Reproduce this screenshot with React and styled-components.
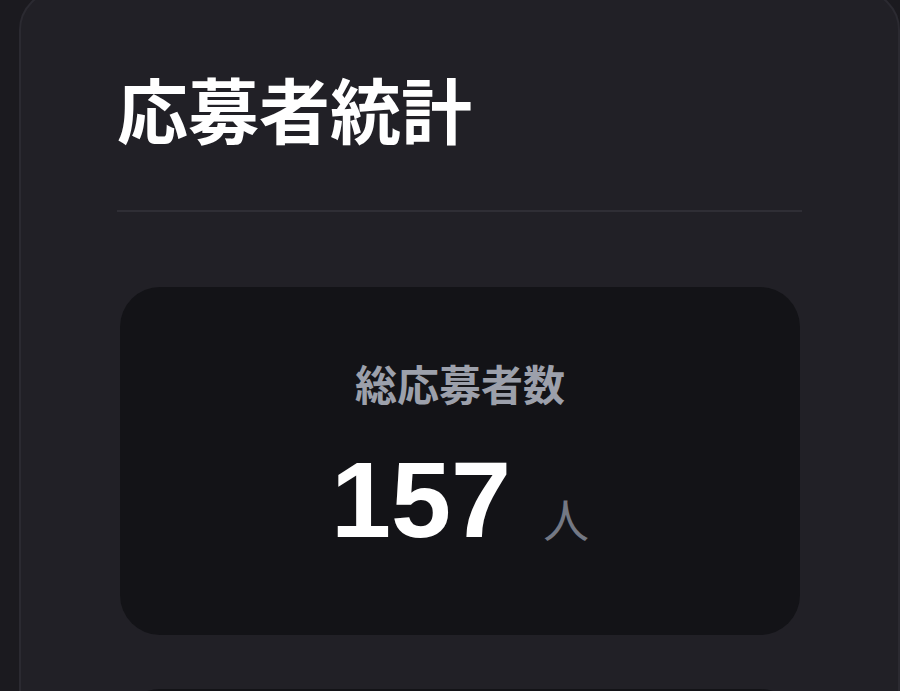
import styled, { createGlobalStyle } from "styled-components";

const GlobalStyle = createGlobalStyle`
  html, body {
    margin: 0;
    padding: 0;
    background: #1b1a1f;
    overflow: hidden;
  }
  body {
    font-family: "Liberation Sans", "Noto Sans CJK JP", sans-serif;
  }
`;

const Page = styled.div`
  width: 900px;
  height: 691px;
  overflow: hidden;
`;

const Card = styled.section`
  margin: -10px 0 0 19px;
  width: 881px;
  height: 1100px;
  box-sizing: border-box;
  background: #212026;
  border: 2px solid #2b2a31;
  border-radius: 40px;
  padding: 73px 96px 0 96px;
`;

const Title = styled.h1`
  margin: 0;
  font-family: "Noto Sans CJK JP", sans-serif;
  font-size: 71px;
  font-weight: 700;
  line-height: 84px;
  color: #ffffff;
  letter-spacing: 0;
`;

const Divider = styled.hr`
  margin: 61px 0 0;
  border: none;
  height: 2px;
  background: #2f2e35;
`;

const StatList = styled.div`
  display: flex;
  flex-direction: column;
  gap: 54px;
  margin: 75px 2px 0 3px;
`;

const StatBox = styled.div`
  height: 348px;
  box-sizing: border-box;
  background: #131317;
  border-radius: 40px;
  display: flex;
  flex-direction: column;
  align-items: center;
  padding-top: 66px;
`;

const StatLabel = styled.div`
  font-family: "Noto Sans CJK JP", sans-serif;
  font-size: 42px;
  font-weight: 700;
  line-height: 60px;
  color: #9ca0ab;
`;

const StatValue = styled.div`
  display: flex;
  align-items: baseline;
  gap: 32px;
  margin-top: 22px;
`;

const Number = styled.span`
  font-family: "Liberation Sans", Arial, sans-serif;
  font-size: 108px;
  font-weight: 700;
  line-height: 130px;
  color: #ffffff;
`;

const Unit = styled.span`
  font-family: "Noto Sans CJK JP", sans-serif;
  font-size: 46px;
  font-weight: 400;
  color: #737884;
`;

export default function App() {
  return (
    <Page>
      <GlobalStyle />
      <Card>
        <Title>応募者統計</Title>
        <Divider />
        <StatList>
          <StatBox>
            <StatLabel>総応募者数</StatLabel>
            <StatValue>
              <Number>157</Number>
              <Unit>人</Unit>
            </StatValue>
          </StatBox>
          {/* next panel, only its top edge shows below the fold */}
          <StatBox />
        </StatList>
      </Card>
    </Page>
  );
}
